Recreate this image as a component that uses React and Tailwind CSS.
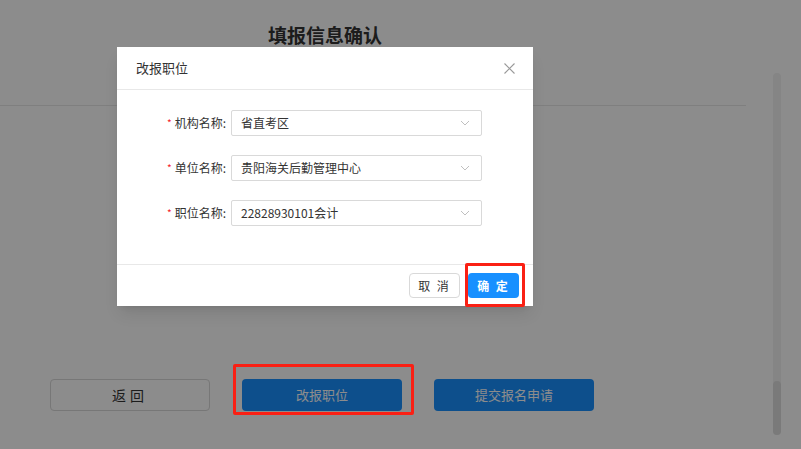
import React from "react";

function Chevron() {
  return (
    <svg width="10" height="6" viewBox="0 0 10 6" fill="none">
      <path d="M1 1 L5 5 L9 1" stroke="#c0c0c0" strokeWidth="1" />
    </svg>
  );
}

function Row({ label, value }) {
  return (
    <div className="flex items-center h-[25px]">
      <div className="w-[114px] flex items-center justify-end pr-[5px] text-[12px] text-[#333]">
        <span className="text-[#f5222d] text-[10px] mr-[3px] leading-none">*</span>
        <span>{label}:</span>
      </div>
      <div className="w-[251px] h-[26px] border border-[#d9d9d9] rounded-[2px] flex items-center justify-between pl-[9px] pr-[11px] text-[12px] text-[#333]">
        <span>{value}</span>
        <Chevron />
      </div>
    </div>
  );
}

export default function App() {
  return (
    <div className="relative w-[801px] h-[449px] overflow-hidden bg-white font-['Noto_Sans_CJK_SC',sans-serif]">
      <div className="flex h-full">
        <div className="w-[746px] flex flex-col">
          <div className="h-[106px] border-b border-[#e8e8e8]">
            <div className="w-[650px] pt-[23px] text-center text-[19px] font-bold text-[#333] leading-[24px]">
              填报信息确认
            </div>
          </div>
          <div className="flex gap-[32px] pl-[50px] mt-[273px]">
            <div className="w-[160px] h-[32px] border border-[#d9d9d9] rounded-[4px] flex items-center justify-center text-[14px] text-[#333] tracking-[4px]">
              返回
            </div>
            <div className="w-[160px] h-[32px] rounded-[4px] bg-[#1890ff] flex items-center justify-center text-[13px] text-white">
              改报职位
            </div>
            <div className="w-[160px] h-[32px] rounded-[4px] bg-[#1890ff] flex items-center justify-center text-[13px] text-white">
              提交报名申请
            </div>
          </div>
        </div>
        <div className="ml-[27px] mt-[73px] w-[8px] h-[362px] rounded-full bg-[#f3f3f3] flex flex-col justify-end">
          <div className="h-[54px] rounded-full bg-[#dedede]" />
        </div>
      </div>

      <div className="absolute inset-0 bg-black/45" />

      <div className="absolute left-[117px] top-[47px] w-[416px] bg-white shadow-lg">
        <div className="h-[43px] px-[19px] flex items-center justify-between border-b border-[#e8e8e8]">
          <span className="text-[13px] text-[#333]">改报职位</span>
          <svg width="11" height="11" viewBox="0 0 11 11" className="mr-[-1px]">
            <path d="M0.5 0.5 L10.5 10.5 M10.5 0.5 L0.5 10.5" stroke="#999" strokeWidth="1.1" />
          </svg>
        </div>
        <div className="pt-[20px] pb-[39px] flex flex-col gap-[20px]">
          <Row label="机构名称" value="省直考区" />
          <Row label="单位名称" value="贵阳海关后勤管理中心" />
          <Row label="职位名称" value="22828930101会计" />
        </div>
        <div className="border-t border-[#e8e8e8] flex justify-end gap-[8px] pt-[8px] pb-[8px] pr-[14px]">
          <div className="w-[51px] h-[25px] border border-[#d9d9d9] rounded-[4px] flex items-center justify-center text-[12px] text-[#333] tracking-[2px]">
            取 消
          </div>
          <div className="w-[51px] h-[25px] rounded-[4px] bg-[#1890ff] flex items-center justify-center text-[12px] text-white font-bold tracking-[2px]">
            确 定
          </div>
        </div>
      </div>

      <div className="absolute left-[233px] top-[364px] w-[181px] h-[51px] border-[3px] border-[#fa2014] rounded-[2px]" />
      <div className="absolute left-[465px] top-[263px] w-[60px] h-[44px] border-[3px] border-[#fa2014] rounded-[2px]" />
    </div>
  );
}
